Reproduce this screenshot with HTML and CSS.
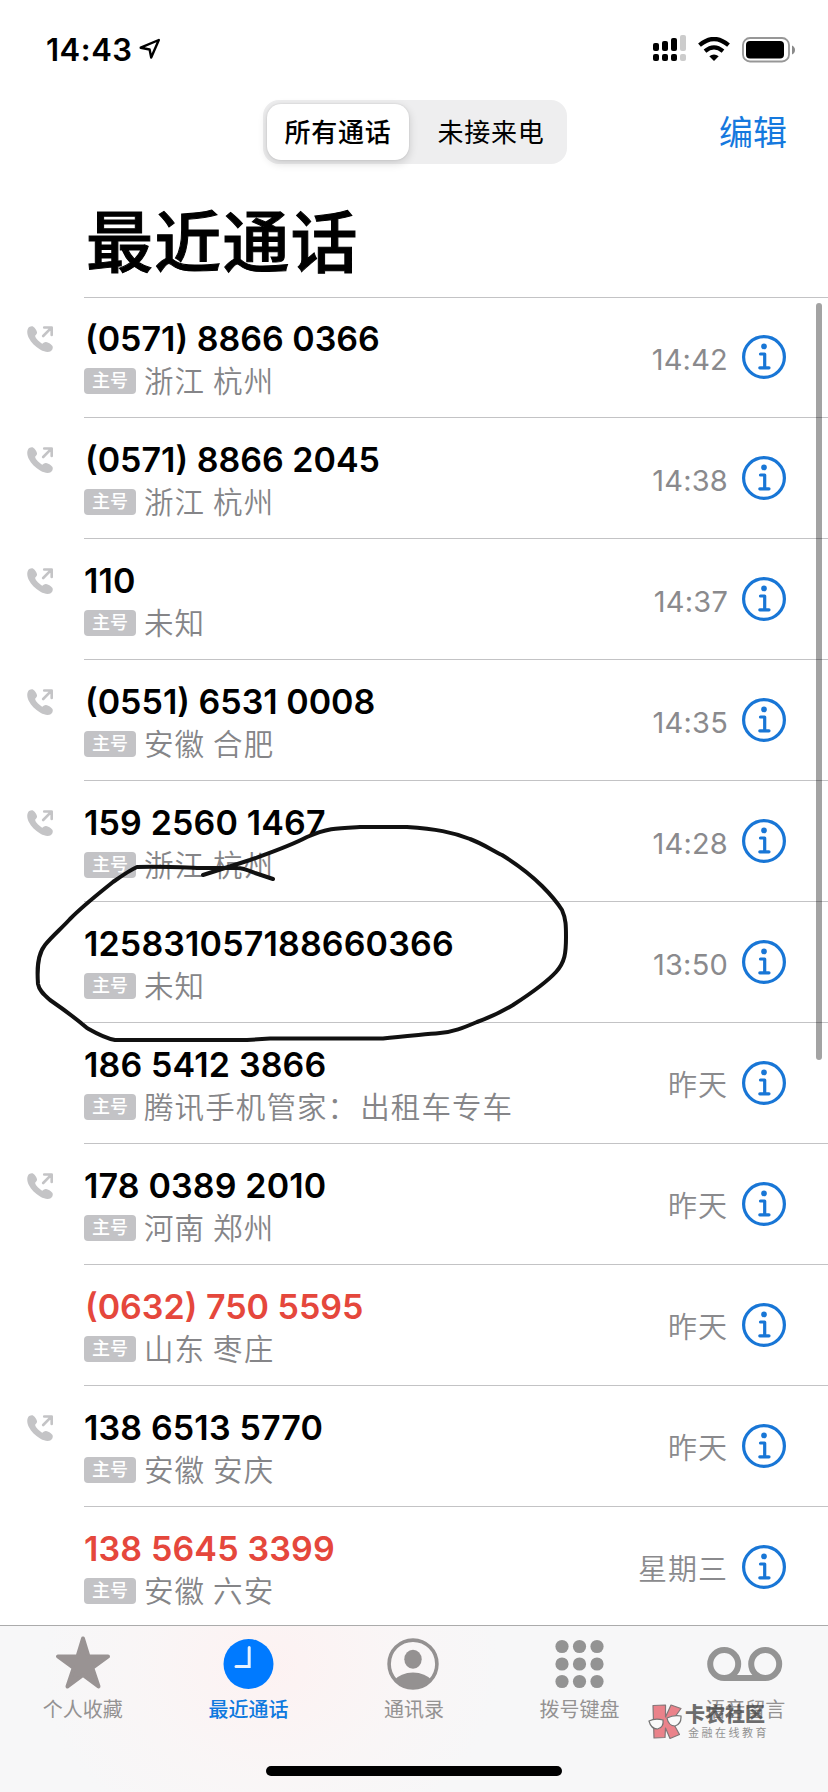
FILE: index.html
```html
<!DOCTYPE html>
<html lang="zh-CN">
<head>
<meta charset="utf-8">
<title>最近通话</title>
<link rel="stylesheet" href="styles.css">
</head>
<body>
<svg class="defs" width="0" height="0">
  <symbol id="out" viewBox="0 0 26 26">
    <path fill="#c4c4c6" d="M1.1 2.2C2.3.7 4.6-.2 6.3.7C8 1.700 9.700 4.500 10 6.200C10.200 7.700 9.100 8.700 8.100 9.800C8.300 12.300 12.700 16.700 15.500 17.700C16.600 16.800 17.700 15.900 19.100 16.100C21 16.500 24 18.100 25.300 19.700C26.500 21.600 25.300 24 23.700 25.200C21.300 26.600 17.300 26 13.500 23.800C8.500 21 4 16.500 1.700 11.800C.2 8.600-.4 4.600 1.100 2.200Z"/>
    <path fill="none" stroke="#c4c4c6" stroke-width="2.600" stroke-linecap="round" stroke-linejoin="round" d="M16.200 10 24.200 1.900M17.200 1.500H24.700V9"/>
  </symbol>
  <symbol id="info" viewBox="0 0 44 44">
    <circle cx="22" cy="22" r="20.400" fill="none" stroke="#1876d6" stroke-width="3.200"/>
    <circle cx="22" cy="11.400" r="2.800" fill="#1876d6"/>
    <path fill="none" stroke="#1876d6" stroke-width="3.200" stroke-linecap="round" stroke-linejoin="round" d="M18.500 19H22.700V32.500M17.800 32.800H27"/>
  </symbol>
</svg>
<main class="phone">
  <header class="header">
    <div class="status">
      <span class="clock">14:43</span>
      <svg class="loc" width="22" height="22" viewBox="0 0 22 22"><path fill="none" stroke="#000" stroke-width="2.400" stroke-linejoin="round" d="M1.700 9.700 19.800 2 12.200 19.600 10.600 11.500Z"/></svg>
      <svg class="signal" width="34" height="27" viewBox="0 0 34 27">
        <g><rect x="0" y="8" width="6" height="8" rx="2"/><rect x="9" y="6" width="6" height="10" rx="2"/><rect x="18" y="3" width="6" height="13" rx="2"/><rect x="0" y="19" width="6" height="7" rx="2"/><rect x="9" y="19" width="6" height="7" rx="2"/><rect x="18" y="19" width="6" height="7" rx="2"/></g>
        <g fill="#ccc"><rect x="27" y="0" width="6" height="16" rx="2"/><rect x="27" y="19" width="6" height="7" rx="2"/></g>
      </svg>
      <svg class="wifi" width="32" height="24" viewBox="0 0 32 24">
        <g fill="none" stroke="#000" stroke-width="4.200"><path d="M1.500 8.200Q16-4.300 30.500 8.200"/><path d="M7 14.100Q16 6.700 25 14.100"/></g>
        <path d="M11.300 19.300Q16 15.700 20.700 19.300L16 24Z"/>
      </svg>
      <svg class="battery" width="54" height="26" viewBox="0 0 54 26">
        <rect x="1" y="1" width="46" height="23.500" rx="7" fill="none" stroke="#979797" stroke-width="1.800"/>
        <rect x="4" y="4" width="38" height="17.500" rx="4"/>
        <path fill="#8a8a8a" d="M50 8.500Q53 10 53 13T50 17.500Z"/>
      </svg>
    </div>
    <nav class="toolbar">
      <div class="segments"><span class="seg on">所有通话</span><span class="seg">未接来电</span></div>
      <a class="edit">编辑</a>
    </nav>
    <h1 class="title">最近通话</h1>
  </header>
  <section class="list">
    <article class="row"><svg class="out"><use href="#out"/></svg><div class="main"><div class="num paren">(0571) 8866 0366</div><div class="sub"><b class="tag">主号</b>浙江 杭州</div></div><span class="time">14:42</span><svg class="info"><use href="#info"/></svg></article>
    <article class="row"><svg class="out"><use href="#out"/></svg><div class="main"><div class="num paren">(0571) 8866 2045</div><div class="sub"><b class="tag">主号</b>浙江 杭州</div></div><span class="time">14:38</span><svg class="info"><use href="#info"/></svg></article>
    <article class="row"><svg class="out"><use href="#out"/></svg><div class="main"><div class="num">110</div><div class="sub"><b class="tag">主号</b>未知</div></div><span class="time">14:37</span><svg class="info"><use href="#info"/></svg></article>
    <article class="row"><svg class="out"><use href="#out"/></svg><div class="main"><div class="num paren">(0551) 6531 0008</div><div class="sub"><b class="tag">主号</b>安徽 合肥</div></div><span class="time">14:35</span><svg class="info"><use href="#info"/></svg></article>
    <article class="row"><svg class="out"><use href="#out"/></svg><div class="main"><div class="num">159 2560 1467</div><div class="sub"><b class="tag">主号</b>浙江 杭州</div></div><span class="time">14:28</span><svg class="info"><use href="#info"/></svg></article>
    <article class="row"><div class="main"><div class="num">125831057188660366</div><div class="sub"><b class="tag">主号</b>未知</div></div><span class="time">13:50</span><svg class="info"><use href="#info"/></svg></article>
    <article class="row"><div class="main"><div class="num">186 5412 3866</div><div class="sub"><b class="tag">主号</b>腾讯手机管家：<span class="label">出租车专车</span></div></div><span class="time day">昨天</span><svg class="info"><use href="#info"/></svg></article>
    <article class="row"><svg class="out"><use href="#out"/></svg><div class="main"><div class="num">178 0389 2010</div><div class="sub"><b class="tag">主号</b>河南 郑州</div></div><span class="time day">昨天</span><svg class="info"><use href="#info"/></svg></article>
    <article class="row missed"><div class="main"><div class="num paren">(0632) 750 5595</div><div class="sub"><b class="tag">主号</b>山东 枣庄</div></div><span class="time day">昨天</span><svg class="info"><use href="#info"/></svg></article>
    <article class="row"><svg class="out"><use href="#out"/></svg><div class="main"><div class="num">138 6513 5770</div><div class="sub"><b class="tag">主号</b>安徽 安庆</div></div><span class="time day">昨天</span><svg class="info"><use href="#info"/></svg></article>
    <article class="row missed"><div class="main"><div class="num">138 5645 3399</div><div class="sub"><b class="tag">主号</b>安徽 六安</div></div><span class="time day">星期三</span><svg class="info"><use href="#info"/></svg></article>
  </section>
  <footer class="tabs">
    <div class="tab"><svg width="56" height="54" viewBox="0 0 56 54"><path fill="#999393" stroke="#999393" stroke-width="4" stroke-linejoin="round" d="M28 2.500 33.500 20.500H53L37.300 32 43.500 50.500 28 39 12.500 50.500 18.700 32 3 20.500H22.500Z"/></svg><span>个人收藏</span></div>
    <div class="tab on"><svg width="54" height="54" viewBox="0 0 54 54"><circle cx="27.500" cy="28" r="25" fill="#007aff"/><path fill="none" stroke="#e8f3ff" stroke-width="3" stroke-linecap="round" d="M28.200 11.500V30.500H15"/></svg><span>最近通话</span></div>
    <div class="tab"><svg width="54" height="54" viewBox="0 0 54 54"><defs><clipPath id="head"><circle cx="26" cy="28" r="25"/></clipPath></defs><circle cx="26" cy="28" r="23.900" fill="none" stroke="#949191" stroke-width="3.600"/><ellipse cx="26" cy="23.300" rx="8.700" ry="9.500" fill="#949191"/><path clip-path="url(#head)" fill="#949191" d="M6 45Q14 36.500 26 36.500T46 45V54H6Z"/></svg><span>通讯录</span></div>
    <div class="tab"><svg width="54" height="54" viewBox="0 0 54 54"><g fill="#939393"><circle cx="9" cy="10.500" r="6.600"/><circle cx="26.500" cy="10.500" r="6.600"/><circle cx="44" cy="10.500" r="6.600"/><circle cx="9" cy="28" r="6.600"/><circle cx="26.500" cy="28" r="6.600"/><circle cx="44" cy="28" r="6.600"/><circle cx="9" cy="45.500" r="6.600"/><circle cx="26.500" cy="45.500" r="6.600"/><circle cx="44" cy="45.500" r="6.600"/></g></svg><span>拨号键盘</span></div>
    <div class="tab"><svg width="76" height="54" viewBox="0 0 76 54"><g fill="none" stroke="#949494" stroke-width="6"><circle cx="17.200" cy="28" r="14"/><circle cx="58.200" cy="28" r="14"/><path d="M17 42H58"/></g></svg><span>语音留言</span></div>
  </footer>
  <i class="scrollbar"></i>
  <i class="home"></i>
  <svg class="scribble" width="828" height="1792" viewBox="0 0 828 1792"><path d="M203 875 250 860C275 851 290 846 307 837C327 828 337 828 360 827H407C436 829 452 832 470 839C481 843 492 850 502 855C518 865 530 874 542 886C551 895 557 902 562 910C566 919 566 926 566 937C566 953 565 962 556 972C545 984 530 994 513 1005C498 1014 488 1018 477 1022C463 1028 453 1032 440 1033C420 1035 402 1036 383 1038.500H270L247 1040H115C104 1038 94 1032 87 1028C80 1022 66 1011 50 1000C43 994 39 990 38 984C37 970 37 955 45 945C52 936 62 928 70 919C84 905 97 895 113 882C123 875 130 870 137 867C155 866 175 867 200 868H237C244 868 250 871 255 873L273 879"/></svg>
  <div class="watermark">
    <svg width="34" height="36" viewBox="0 0 34 36"><g fill="#e9767f" stroke="#77696b" stroke-width="1.200" stroke-linejoin="round"><path d="M5 1.500 17.500 1V13L23 1 33 4.500 24 17 31.500 30.500 22 34.500 17.500 24 17 33.500 6 34Z"/></g><g fill="#fafafa" stroke="#666" stroke-width="1.200"><path d="M1 17Q7 14 15 16Q16 23.500 9.500 25Q3 25 1 17Z"/><path d="M19 14Q26 10.500 33 12Q33.500 20 27 22Q20.500 22 19 14Z"/></g></svg>
    <div class="wm-text"><strong>卡农社区</strong><small>金融在线教育</small></div>
  </div>
</main>
</body>
</html>
```
FILE: styles.css
```css
* { box-sizing: border-box; }
body { margin: 0; background: #fff; font-family: Inter, "Noto Sans CJK SC", sans-serif; }
.defs { position: absolute; }
.phone { position: relative; width: 828px; height: 1792px; overflow: hidden; display: flex; flex-direction: column; background: #fff; }
.header { height: 298px; flex: none; position: relative; }
.header::after { content: ""; position: absolute; left: 84px; right: 0; bottom: 0; height: 1px; background: #c3c3c5; }
.status { height: 100px; display: flex; align-items: flex-start; padding: 35px 32px 0 46px; }
.clock { font-size: 31px; line-height: 30px; font-weight: 600; width: 93px; letter-spacing: 0.5px; }
.loc { margin-top: 3px; }
.signal { margin-left: auto; }
.wifi { margin: 2px 0 0 11px; }
.battery { margin: 2px 0 0 12px; width: 54px; }
.toolbar { height: 64px; display: flex; justify-content: flex-end; align-items: center; padding-right: 41px; }
.segments { width: 304px; height: 64px; margin-right: 152px; padding: 4px; border-radius: 16px; background: #eeeeef; display: flex; font-size: 26px; font-weight: 400; letter-spacing: 0.7px; }
.seg { flex: 1; display: flex; align-items: center; justify-content: center; padding: 0 0 3px 10px; }
.seg.on { flex: none; width: 142px; padding-left: 0; background: #fff; border-radius: 14px; font-weight: 500; box-shadow: 0 3px 10px rgba(0,0,0,.16), 0 0 2px rgba(0,0,0,.12); }
.edit { font-size: 34px; line-height: 50px; padding-top: 1px; color: #1579de; }
.title { margin: 31px 0 0 86px; font-size: 67px; line-height: 96px; font-weight: 500; -webkit-text-stroke: 1px #000; letter-spacing: 1.200px; }
.list { height: 1328px; margin-top: -1px; overflow: hidden; flex: none; }
.row { height: 121px; display: grid; grid-template-columns: 27px 57px 1fr auto 44px 42px; position: relative; align-items: center; }
.row::after { content: ""; position: absolute; left: 84px; right: 0; bottom: 0; height: 1px; background: #c3c3c5; }
.row:last-child::after { display: none; }
.out { grid-column: 2; grid-row: 1; width: 26px; height: 26px; align-self: start; margin-top: 29px; }
.main { grid-column: 3; grid-row: 1; align-self: start; padding-top: 21px; }
.num { font-size: 34px; line-height: 42px; height: 42px; font-weight: 600; white-space: nowrap; letter-spacing: .15px; }
.num.paren { padding-left: 1px; letter-spacing: 0; }
.missed .num { color: #e5473c; }
.sub { display: flex; align-items: center; height: 42px; font-size: 29.500px; line-height: 40px; padding-bottom: 1px; letter-spacing: 1.100px; word-spacing: -1.500px; color: #858588; white-space: nowrap; font-weight: 350; }
.label { margin-left: 2px; }
.tag { width: 52px; height: 26px; margin: 1px 8px 0 0; border-radius: 4px; background: #c3c3c6; color: #fff; font-size: 18px; line-height: 25px; letter-spacing: 0; font-weight: 500; text-align: center; }
.time { grid-column: 4; grid-row: 1; font-size: 29px; line-height: 40px; color: #8a8a8d; padding: 4px 14px 0 0; letter-spacing: .2px; }
.time.day { font-weight: 350; letter-spacing: 1px; }
.info { grid-column: 5; grid-row: 1; width: 44px; height: 44px; margin-bottom: 2px; }
.tabs { flex: 1; display: grid; grid-template-columns: repeat(5, 1fr); border-top: 1px solid #ababab; background: radial-gradient(ellipse 230px 190px at 270px 40px, #fdf2f2, rgba(251,245,245,.6) 55%, rgba(247,247,248,0)), #f7f7f8; }
.tab { display: flex; flex-direction: column; align-items: center; padding-top: 10px; color: #949292; font-size: 20px; line-height: 30px; }
.tab span { margin-top: 5px; }
.tab.on { color: #0e79df; font-weight: 500; }
.scrollbar { position: absolute; left: 816px; top: 303px; width: 6px; height: 757px; border-radius: 3px; background: rgba(0,0,0,.36); }
.home { position: absolute; left: 266px; top: 1766px; width: 296px; height: 10px; border-radius: 5px; background: #000; }
.scribble { position: absolute; left: 0; top: 0; fill: none; stroke: #111; stroke-width: 4; stroke-linecap: round; stroke-linejoin: round; }
.watermark { position: absolute; left: 648px; top: 1704px; display: flex; gap: 3px; opacity: .9; }
.wm-text { display: flex; flex-direction: column; }
.wm-text strong { font-size: 20px; line-height: 23px; font-weight: 900; color: #444; opacity: .85; }
.wm-text small { font-size: 11px; line-height: 12px; letter-spacing: 2.500px; color: #888; padding-left: 3px; }
```
